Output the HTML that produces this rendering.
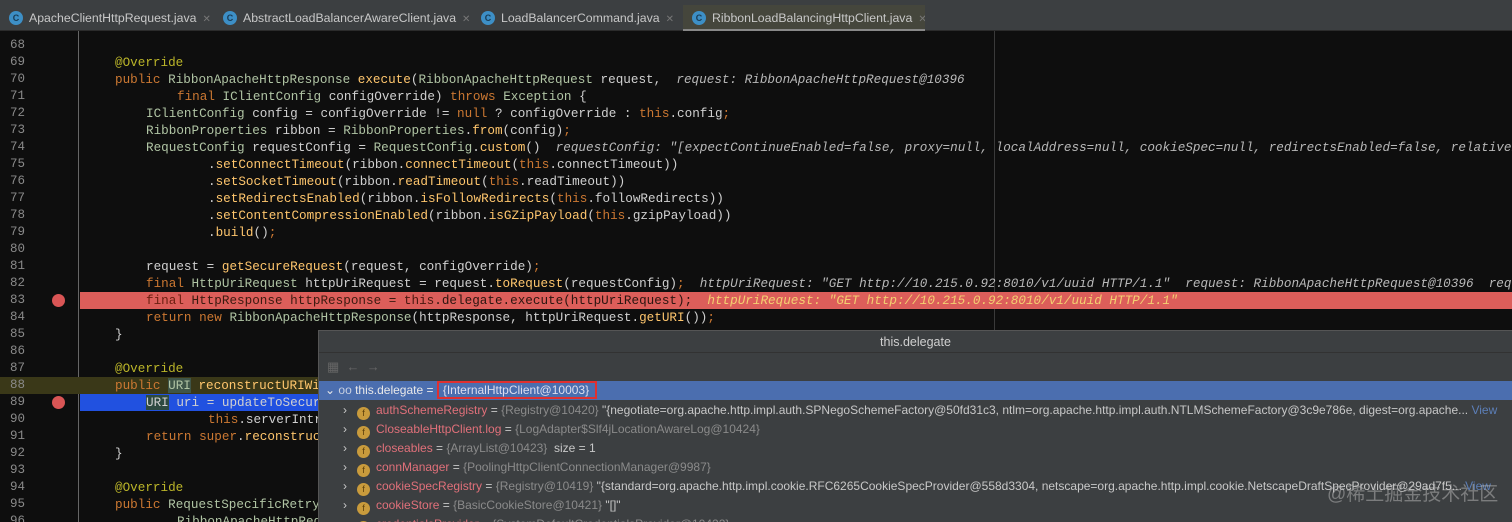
<!DOCTYPE html>
<html><head><meta charset="utf-8"><style>
*{margin:0;padding:0;box-sizing:border-box}
html,body{width:1512px;height:522px;overflow:hidden}
body{background:#0e0e0e;position:relative;font-family:"Liberation Sans",sans-serif}
.tabs{position:absolute;left:0;top:0;width:1512px;height:31px;background:#3c3f41;border-bottom:1px solid #2b2b2b}
.tab{position:absolute;top:5px;height:26px;font-size:12.3px;color:#c8c8c8;line-height:26px;padding-left:29px;white-space:nowrap;overflow:hidden}
.tab .ic{position:absolute;left:9px;top:6px;width:14px;height:14px;border-radius:50%;background:#3d8fc6;color:#183b55;font-size:9px;line-height:14px;text-align:center;font-weight:bold}
.tab .x{color:#777;margin-left:6px;font-size:10px}
.ln{position:absolute;left:0;height:17px;width:1512px;font-family:"Liberation Mono",monospace;font-size:12.65px;line-height:17px;white-space:pre;color:#d0d0d0;overflow:hidden}
.num{position:absolute;left:10px;color:#8a8a8a;font-size:12.5px}
.t{position:absolute}
.k{color:#cc7832}.a{color:#bbb529}.m{color:#ffc66d}.ty{color:#b0c4a4}.h{color:#b8b8b8;font-style:italic}
.guide{position:absolute;top:31px;left:78px;width:1px;height:491px;background:#666}
.margin{position:absolute;top:31px;left:994px;width:1px;height:300px;background:#3a3a3a}
.pop{position:absolute;left:318px;top:330px;width:1194px;height:192px;background:#3c3f41;border-top:1px solid #555;border-left:1px solid #555;overflow:hidden}
.pt{height:22px;background:#3c3f41;color:#cfcfcf;font-size:12.5px;text-align:center;line-height:22px;border-bottom:1px solid #323232}
.row{position:absolute;left:0;width:1194px;height:19px;font-size:12px;line-height:19px;color:#c8c8c8;white-space:nowrap;overflow:hidden}
.f{display:inline-block;width:13px;height:13px;border-radius:50%;background:#c99b3c;color:#5a3e0a;font-size:9px;text-align:center;line-height:13px;vertical-align:-2px;margin-right:6px}
.fn{color:#e0707a}.g{color:#8a8a8a}
.bp{position:absolute;left:52px;width:13px;height:13px;border-radius:50%;background:#d95555}
</style></head><body>
<div class="tabs">
<div class="tab" style="left:0;width:214px"><span class="ic">C</span>ApacheClientHttpRequest.java<span class="x">✕</span></div>
<div class="tab" style="left:214px;width:258px"><span class="ic">C</span>AbstractLoadBalancerAwareClient.java<span class="x">✕</span></div>
<div class="tab" style="left:472px;width:211px"><span class="ic">C</span>LoadBalancerCommand.java<span class="x">✕</span></div>
<div class="tab" style="left:683px;width:242px;background:#45463c;border-bottom:2px solid #888"><span class="ic">C</span>RibbonLoadBalancingHttpClient.java<span class="x">✕</span></div>
</div>
<div class="guide"></div><div class="margin"></div>
<div class="ln" style="top:37px"><span class="num">68</span></div>
<div class="ln" style="top:54px"><span class="num">69</span><span class="t a" style="left:115px">@Override</span></div>
<div class="ln" style="top:71px"><span class="num">70</span><span class="t" style="left:115px"><span class="k">public </span><span class="ty">RibbonApacheHttpResponse </span><span class="m">execute</span>(<span class="ty">RibbonApacheHttpRequest</span> request,  <span class="h">request: RibbonApacheHttpRequest@10396</span></span></div>
<div class="ln" style="top:88px"><span class="num">71</span><span class="t" style="left:177px"><span class="k">final </span><span class="ty">IClientConfig</span> configOverride) <span class="k">throws </span><span class="ty">Exception</span> {</span></div>
<div class="ln" style="top:105px"><span class="num">72</span><span class="t" style="left:146px"><span class="ty">IClientConfig</span> config = configOverride != <span class="k">null</span> ? configOverride : <span class="k">this</span>.config<span class="k">;</span></span></div>
<div class="ln" style="top:122px"><span class="num">73</span><span class="t" style="left:146px"><span class="ty">RibbonProperties</span> ribbon = <span class="ty">RibbonProperties</span>.<span class="m">from</span>(config)<span class="k">;</span></span></div>
<div class="ln" style="top:139px"><span class="num">74</span><span class="t" style="left:146px"><span class="ty">RequestConfig</span> requestConfig = <span class="ty">RequestConfig</span>.<span class="m">custom</span>()  <span class="h">requestConfig: "[expectContinueEnabled=false, proxy=null, localAddress=null, cookieSpec=null, redirectsEnabled=false, relativeRedirectsAllowed</span></span></div>
<div class="ln" style="top:156px"><span class="num">75</span><span class="t" style="left:208px">.<span class="m">setConnectTimeout</span>(ribbon.<span class="m">connectTimeout</span>(<span class="k">this</span>.connectTimeout))</span></div>
<div class="ln" style="top:173px"><span class="num">76</span><span class="t" style="left:208px">.<span class="m">setSocketTimeout</span>(ribbon.<span class="m">readTimeout</span>(<span class="k">this</span>.readTimeout))</span></div>
<div class="ln" style="top:190px"><span class="num">77</span><span class="t" style="left:208px">.<span class="m">setRedirectsEnabled</span>(ribbon.<span class="m">isFollowRedirects</span>(<span class="k">this</span>.followRedirects))</span></div>
<div class="ln" style="top:207px"><span class="num">78</span><span class="t" style="left:208px">.<span class="m">setContentCompressionEnabled</span>(ribbon.<span class="m">isGZipPayload</span>(<span class="k">this</span>.gzipPayload))</span></div>
<div class="ln" style="top:224px"><span class="num">79</span><span class="t" style="left:208px">.<span class="m">build</span>()<span class="k">;</span></span></div>
<div class="ln" style="top:241px"><span class="num">80</span></div>
<div class="ln" style="top:258px"><span class="num">81</span><span class="t" style="left:146px">request = <span class="m">getSecureRequest</span>(request, configOverride)<span class="k">;</span></span></div>
<div class="ln" style="top:275px"><span class="num">82</span><span class="t" style="left:146px"><span class="k">final </span><span class="ty">HttpUriRequest</span> httpUriRequest = request.<span class="m">toRequest</span>(requestConfig)<span class="k">;</span>  <span class="h">httpUriRequest: "GET http://10.215.0.92:8010/v1/uuid HTTP/1.1"  request: RibbonApacheHttpRequest@10396  requestConfig</span></span></div>
<div class="ln" style="top:292px;left:80px;width:1432px;background:#dc5e5a"></div>
<div class="ln" style="top:292px;background:transparent"><span class="num">83</span><span class="bp" style="top:2px"></span><span class="t" style="left:146px;color:#2a1510"><span style="color:#6a1e10">final </span><span style="color:#3a1a10">HttpResponse httpResponse = </span><span style="color:#4a1810">this</span>.delegate.execute(httpUriRequest)<span>;</span>  <span class="h" style="color:#f4d070">httpUriRequest: "GET http://10.215.0.92:8010/v1/uuid HTTP/1.1"</span></span></div>
<div class="ln" style="top:309px"><span class="num">84</span><span class="t" style="left:146px"><span class="k">return new </span><span class="ty">RibbonApacheHttpResponse</span>(httpResponse, httpUriRequest.<span class="m">getURI</span>())<span class="k">;</span></span></div>
<div class="ln" style="top:326px"><span class="num">85</span><span class="t" style="left:115px">}</span></div>
<div class="ln" style="top:343px"><span class="num">86</span></div>
<div class="ln" style="top:360px"><span class="num">87</span><span class="t a" style="left:115px">@Override</span></div>
<div class="ln" style="top:377px;background:#3a3818"><span class="num">88</span><span class="t" style="left:115px"><span class="k">public </span><span class="ty" style="background:#3f5548">URI</span> <span class="m">reconstructURIWi</span></span></div>
<div class="ln" style="top:394px;left:80px;width:240px;background:#2151e0"></div>
<div class="ln" style="top:394px;background:transparent"><span class="num">89</span><span class="bp" style="top:2px"></span><span class="t" style="left:146px"><span style="background:#2e4a40">URI</span> uri = updateToSecur</span></div>
<div class="ln" style="top:411px"><span class="num">90</span><span class="t" style="left:208px"><span class="k">this</span>.serverIntr</span></div>
<div class="ln" style="top:428px"><span class="num">91</span><span class="t" style="left:146px"><span class="k">return super</span>.<span class="m">reconstruc</span></span></div>
<div class="ln" style="top:445px"><span class="num">92</span><span class="t" style="left:115px">}</span></div>
<div class="ln" style="top:462px"><span class="num">93</span></div>
<div class="ln" style="top:479px"><span class="num">94</span><span class="t a" style="left:115px">@Override</span></div>
<div class="ln" style="top:496px"><span class="num">95</span><span class="t" style="left:115px"><span class="k">public </span><span class="ty">RequestSpecificRetry</span></span></div>
<div class="ln" style="top:513px;height:9px"><span class="num">96</span><span class="t ty" style="left:177px">RibbonApacheHttpReq</span></div>
<div class="pop">
<div class="pt">this.delegate</div>
<div style="position:absolute;left:8px;top:28px;color:#666;font-size:13px">▦ &nbsp;← &nbsp;→</div>
<div class="row" style="top:50px;background:#4b6eaf;color:#e8e8e8;padding-left:6px">⌄ <span style="color:#c8d0e0">oo</span> this.delegate = <span style="border:2px solid #e03030;padding:0 6px 0 4px;color:#dde">{InternalHttpClient@10003}</span></div>
<div class="row" style="top:70px;padding-left:24px">›&nbsp;&nbsp; <span class="f">f</span><span class="fn">authSchemeRegistry</span> = <span class="g">{Registry@10420}</span> "{negotiate=org.apache.http.impl.auth.SPNegoSchemeFactory@50fd31c3, ntlm=org.apache.http.impl.auth.NTLMSchemeFactory@3c9e786e, digest=org.apache... <span style="color:#5c7fb8">View</span></div>
<div class="row" style="top:89px;padding-left:24px">›&nbsp;&nbsp; <span class="f">f</span><span class="fn">CloseableHttpClient.log</span> = <span class="g">{LogAdapter$Slf4jLocationAwareLog@10424}</span></div>
<div class="row" style="top:108px;padding-left:24px">›&nbsp;&nbsp; <span class="f">f</span><span class="fn">closeables</span> = <span class="g">{ArrayList@10423}</span>&nbsp; size = 1</div>
<div class="row" style="top:127px;padding-left:24px">›&nbsp;&nbsp; <span class="f">f</span><span class="fn">connManager</span> = <span class="g">{PoolingHttpClientConnectionManager@9987}</span></div>
<div class="row" style="top:146px;padding-left:24px">›&nbsp;&nbsp; <span class="f">f</span><span class="fn">cookieSpecRegistry</span> = <span class="g">{Registry@10419}</span> "{standard=org.apache.http.impl.cookie.RFC6265CookieSpecProvider@558d3304, netscape=org.apache.http.impl.cookie.NetscapeDraftSpecProvider@29ad7f5... <span style="color:#5c7fb8">View</span></div>
<div class="row" style="top:165px;padding-left:24px">›&nbsp;&nbsp; <span class="f">f</span><span class="fn">cookieStore</span> = <span class="g">{BasicCookieStore@10421}</span> "[]"</div>
<div class="row" style="top:184px;padding-left:24px">›&nbsp;&nbsp; <span class="f">f</span><span class="fn">credentialsProvider</span> = <span class="g">{SystemDefaultCredentialsProvider@10422}</span></div>
<div style="position:absolute;left:1008px;top:148px;font-size:19px;white-space:nowrap;color:rgba(200,200,200,0.45);font-family:'Liberation Sans','Noto Sans CJK SC',sans-serif">@稀土掘金技术社区</div>
</div>
</body></html>
